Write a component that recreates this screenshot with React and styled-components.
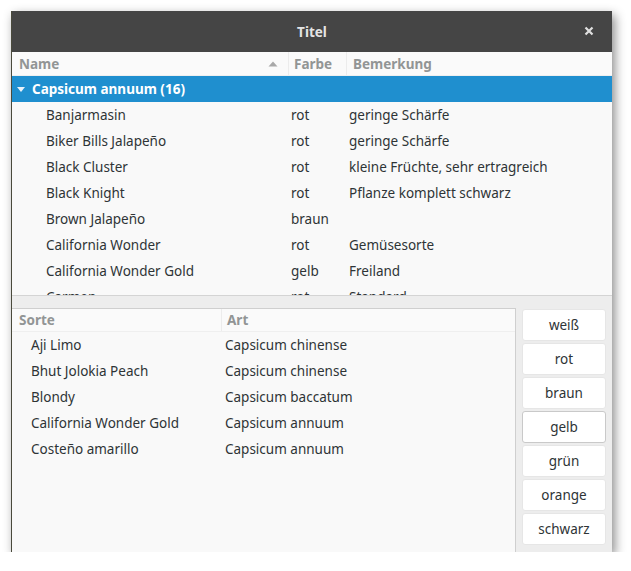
import React from "react";
import styled, { createGlobalStyle } from "styled-components";

const GlobalStyle = createGlobalStyle`
  body {
    margin: 0;
    background: #ffffff;
    font-family: "Noto Sans", "Open Sans", sans-serif;
  }
`;

const Window = styled.div`
  display: flex;
  flex-direction: column;
  width: 601px;
  height: 541px;
  margin: 11px 0 0 11px;
  background: #ededed;
  border-left: 1px solid #4a4a3c;
  box-sizing: border-box;
  box-shadow: 3px 4px 10px rgba(0, 0, 0, 0.45);
  font-size: 13.5px;
  color: #2e3436;
`;

const TitleBar = styled.div`
  position: relative;
  display: flex;
  align-items: center;
  justify-content: center;
  height: 41px;
  flex-shrink: 0;
  background: #454545;
  color: #e4e4e4;
  font-weight: bold;
  font-size: 13.5px;
`;

const CloseButton = styled.div`
  position: absolute;
  right: 18px;
  top: 15px;
  width: 10px;
  height: 10px;
  display: flex;
`;

const TreePane = styled.div`
  height: 243px;
  flex-shrink: 0;
  background: #f9f9f9;
  overflow: hidden;
  border-bottom: 1px solid #d4d4d4;
`;

const HeaderRow = styled.div`
  display: grid;
  grid-template-columns: ${(p) => p.$cols};
  height: ${(p) => p.$height}px;
  box-sizing: border-box;
  background: #fafafa;
  border-bottom: 1px solid #efefef;
  color: #929595;
  font-weight: bold;
`;

const HeaderCell = styled.div`
  display: flex;
  align-items: center;
  padding-left: ${(p) => p.$pad || 6}px;
  padding-right: 10px;
  border-left: ${(p) => (p.$first ? "none" : "1px solid #ececec")};
  justify-content: space-between;
`;

const Row = styled.div`
  display: grid;
  grid-template-columns: ${(p) => p.$cols};
  height: 26px;
  align-items: center;
  white-space: nowrap;
`;

const GroupRow = styled.div`
  display: flex;
  align-items: center;
  height: 26px;
  padding-left: 5px;
  background: #1f8fcf;
  color: #ffffff;
  font-weight: bold;
  gap: 7px;
`;

const Cell = styled.div`
  padding-left: ${(p) => p.$pad}px;
  overflow: hidden;
`;

const BottomPane = styled.div`
  flex: 1;
  display: flex;
  padding: 12px 6px 0 0;
  gap: 6px;
  min-height: 0;
`;

const ListFrame = styled.div`
  flex: 1;
  background: #f9f9f9;
  border: 1px solid #cfcfcf;
  border-left: none;
  border-bottom: none;
`;

const ButtonColumn = styled.div`
  width: 84px;
  display: flex;
  flex-direction: column;
  gap: 2px;
  padding-top: 1px;
`;

const ColorButton = styled.button`
  height: 32px;
  background: #ffffff;
  border: 1px solid ${(p) => (p.$active ? "#c9c9c9" : "#e6e6e6")};
  border-radius: 3px;
  font-family: inherit;
  font-size: 13.5px;
  color: #2e3436;
  padding: 0;
`;

const TREE_COLS = "276px 58px 1fr";
const LIST_COLS = "209px 1fr";

const peppers = [
  ["Banjarmasin", "rot", "geringe Schärfe"],
  ["Biker Bills Jalapeño", "rot", "geringe Schärfe"],
  ["Black Cluster", "rot", "kleine Früchte, sehr ertragreich"],
  ["Black Knight", "rot", "Pflanze komplett schwarz"],
  ["Brown Jalapeño", "braun", ""],
  ["California Wonder", "rot", "Gemüsesorte"],
  ["California Wonder Gold", "gelb", "Freiland"],
  ["Carmen", "rot", "Standard"],
];

const sorts = [
  ["Aji Limo", "Capsicum chinense"],
  ["Bhut Jolokia Peach", "Capsicum chinense"],
  ["Blondy", "Capsicum baccatum"],
  ["California Wonder Gold", "Capsicum annuum"],
  ["Costeño amarillo", "Capsicum annuum"],
];

const colors = ["weiß", "rot", "braun", "gelb", "grün", "orange", "schwarz"];

export default function App() {
  return (
    <>
      <GlobalStyle />
      <Window>
        <TitleBar>
          Titel
          <CloseButton>
            <svg width="10" height="10" viewBox="0 0 10 10">
              <path d="M1.5 1.5 L8.5 8.5 M8.5 1.5 L1.5 8.5" stroke="#e0e0e0" strokeWidth="2.2" />
            </svg>
          </CloseButton>
        </TitleBar>
        <TreePane>
          <HeaderRow $cols={TREE_COLS} $height={24}>
            <HeaderCell $first $pad={7}>
              Name
              <svg width="10" height="6" viewBox="0 0 10 6">
                <path d="M0.5 5.5 L5 0.5 L9.5 5.5 Z" fill="#a8a8a8" />
              </svg>
            </HeaderCell>
            <HeaderCell $pad={5}>Farbe</HeaderCell>
            <HeaderCell $pad={6}>Bemerkung</HeaderCell>
          </HeaderRow>
          <GroupRow>
            <svg width="8" height="5" viewBox="0 0 8 5">
              <path d="M0 0 L8 0 L4 5 Z" fill="#e8f2fa" />
            </svg>
            Capsicum annuum (16)
          </GroupRow>
          {peppers.map(([name, color, note]) => (
            <Row key={name} $cols={TREE_COLS}>
              <Cell $pad={34}>{name}</Cell>
              <Cell $pad={3}>{color}</Cell>
              <Cell $pad={3}>{note}</Cell>
            </Row>
          ))}
        </TreePane>
        <BottomPane>
          <ListFrame>
            <HeaderRow $cols={LIST_COLS} $height={23}>
              <HeaderCell $first $pad={7}>Sorte</HeaderCell>
              <HeaderCell $pad={5}>Art</HeaderCell>
            </HeaderRow>
            {sorts.map(([name, art]) => (
              <Row key={name} $cols={LIST_COLS}>
                <Cell $pad={19}>{name}</Cell>
                <Cell $pad={4}>{art}</Cell>
              </Row>
            ))}
          </ListFrame>
          <ButtonColumn>
            {colors.map((c) => (
              <ColorButton key={c} $active={c === "gelb"}>
                {c}
              </ColorButton>
            ))}
          </ButtonColumn>
        </BottomPane>
      </Window>
    </>
  );
}
